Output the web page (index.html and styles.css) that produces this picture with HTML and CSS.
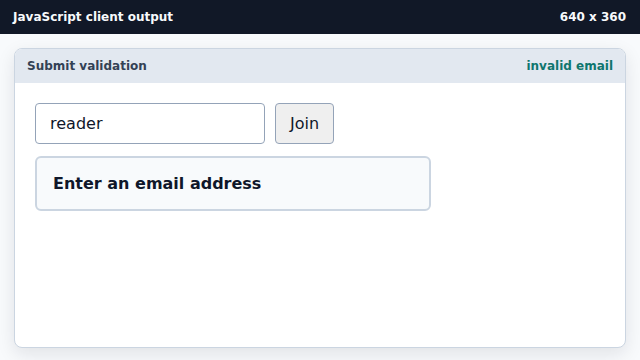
FILE: index.html
```html
<!DOCTYPE html>
<html lang="en">
<head>
  <meta charset="UTF-8">
  <meta name="viewport" content="width=device-width, initial-scale=1.0">
  <title>JavaScript client output</title>
  <link rel="stylesheet" href="styles.css">
</head>
<body>
  <div class="topbar">
    <span>JavaScript client output</span>
    <span>640 x 360</span>
  </div>

  <div class="stage">
    <div class="card">
      <div class="card-head">
        <span class="card-title">Submit validation</span>
        <span class="status">invalid email</span>
      </div>
      <div class="card-body">
        <form class="join-form" onsubmit="return false">
          <input class="email" type="text" value="reader">
          <button class="join" type="submit">Join</button>
        </form>
        <div class="message">Enter an email address</div>
      </div>
    </div>
  </div>
</body>
</html>
```

FILE: styles.css
```css
html, body {
  height: 100%;
}
body {
  margin: 0;
  font-family: "DejaVu Sans", sans-serif;
  background: #f8fafc;
  color: #0f172a;
  display: flex;
  flex-direction: column;
}
.topbar {
  height: 34px;
  flex: none;
  background: #111827;
  color: #f8fafc;
  font-size: 12px;
  font-weight: bold;
  display: flex;
  align-items: center;
  justify-content: space-between;
  padding: 0 14px 0 13px;
}
.stage {
  flex: 1;
  display: flex;
  padding: 14px 14px 12px;
}
.card {
  flex: 1;
  display: flex;
  flex-direction: column;
  background: white;
  border: 1px solid #cbd5e1;
  border-radius: 8px;
  box-shadow: 0 6px 18px rgba(15, 23, 42, 0.1);
  overflow: hidden;
}
.card-head {
  height: 34px;
  background: #e2e8f0;
  display: flex;
  align-items: center;
  justify-content: space-between;
  padding: 0 12px;
  font-size: 12px;
  font-weight: bold;
}
.card-title {
  color: #334155;
}
.status {
  color: #0f766e;
}
.card-body {
  padding: 20px;
}
.join-form {
  display: flex;
  gap: 10px;
  margin: 0;
}
.email {
  width: 230px;
  height: 41px;
  box-sizing: border-box;
  border: 1px solid #94a3b8;
  border-radius: 4px;
  padding: 0 14px;
  font-family: "DejaVu Sans", sans-serif;
  font-size: 16px;
  color: #0f172a;
}
.join {
  height: 41px;
  width: 59px;
  box-sizing: border-box;
  background: #efefef;
  border: 1px solid #94a3b8;
  border-radius: 4px;
  font-family: "DejaVu Sans", sans-serif;
  font-size: 16px;
  color: #0f172a;
  padding: 0;
}
.message {
  width: 396px;
  height: 55px;
  box-sizing: border-box;
  margin-top: 12px;
  background: #f8fafc;
  border: 2px solid #cbd5e1;
  border-radius: 6px;
  padding: 0 16px;
  display: flex;
  align-items: center;
  font-size: 16px;
  font-weight: bold;
  color: #0f172a;
}
```
